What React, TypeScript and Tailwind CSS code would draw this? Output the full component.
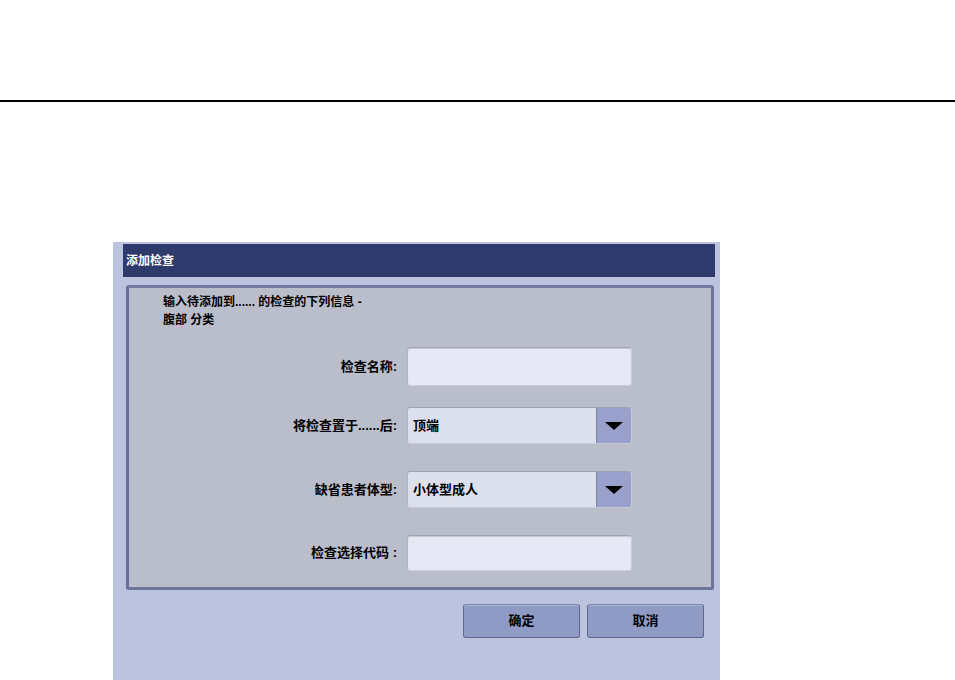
const cjk = { fontFamily: '"Liberation Sans", "Noto Sans CJK SC", sans-serif' };

function TextBox() {
  return (
    <div className="w-[225px] h-full rounded-[3px] bg-[#e6e8f5] border border-[#c9ccdc] border-t-[#9ea3b8] border-l-[#aeb2c6] shadow-[inset_0_1px_1px_rgba(0,0,0,0.15)]" />
  );
}

function Dropdown({ value }: { value: string }) {
  return (
    <div className="w-[225px] h-full flex rounded-[3px] bg-[#dcdfec] border border-[#c6c9d8] border-t-[#9ea3b8] border-l-[#aeb2c6]">
      <div className="flex-1 flex items-center pl-[5px] text-[13px] font-bold text-black">
        {value}
      </div>
      <div className="w-[35px] flex items-center justify-center bg-[#98a0cb] border-l border-[#7c84ab] rounded-r-[2px]">
        <svg width="18" height="8" viewBox="0 0 18 8">
          <path d="M0 0 H18 L9 8 Z" fill="#000" />
        </svg>
      </div>
    </div>
  );
}

function Row({
  label,
  height,
  top,
  children,
}: {
  label: string;
  height: number;
  top: string;
  children: React.ReactNode;
}) {
  return (
    <div className={`flex items-center ${top}`} style={{ height }}>
      <div className="w-[278px] pr-[10px] text-right text-[13px] font-bold text-black">
        {label}
      </div>
      {children}
    </div>
  );
}

function Button({ label }: { label: string }) {
  return (
    <button className="w-[117px] h-[34px] rounded-[3px] bg-[#8f9bc4] border border-[#5e678e] border-t-[#7f88ae] shadow-[inset_0_1px_0_rgba(255,255,255,0.25)] text-[13px] font-bold text-black">
      {label}
    </button>
  );
}

export default function App() {
  return (
    <div className="w-[955px] h-[680px] bg-white overflow-hidden" style={cjk}>
      <div className="h-[100px]" />
      <div className="h-[2px] bg-black" />
      <div className="h-[140px]" />
      <div className="ml-[113px] w-[607px] h-[438px] bg-[#bcc3df] pt-[2px]">
        <div className="ml-[10px] mr-[5px] h-[33px] bg-[#2e3a6b] flex items-center pl-[3px] text-[12px] font-bold text-white">
          添加检查
        </div>
        <div className="mt-[8px] ml-[13px] mr-[6px] h-[305px] rounded-[3px] bg-[#babdca] border-[3px] border-[#6b7499] border-l-[#66709a] border-t-[#717aa0]">
          <div className="pt-[5px] pl-[34px] text-[12px] font-bold leading-[18px] text-black">
            <div>输入待添加到...... 的检查的下列信息 -</div>
            <div>腹部 分类</div>
          </div>
          <Row label="检查名称:" height={39} top="mt-[18px]">
            <TextBox />
          </Row>
          <Row label="将检查置于......后:" height={37} top="mt-[21px]">
            <Dropdown value="顶端" />
          </Row>
          <Row label="缺省患者体型:" height={37} top="mt-[27px]">
            <Dropdown value="小体型成人" />
          </Row>
          <Row label="检查选择代码 :" height={36} top="mt-[27px]">
            <TextBox />
          </Row>
        </div>
        <div className="mt-[14px] flex justify-end gap-[7px] pr-[16px]">
          <Button label="确定" />
          <Button label="取消" />
        </div>
      </div>
    </div>
  );
}
